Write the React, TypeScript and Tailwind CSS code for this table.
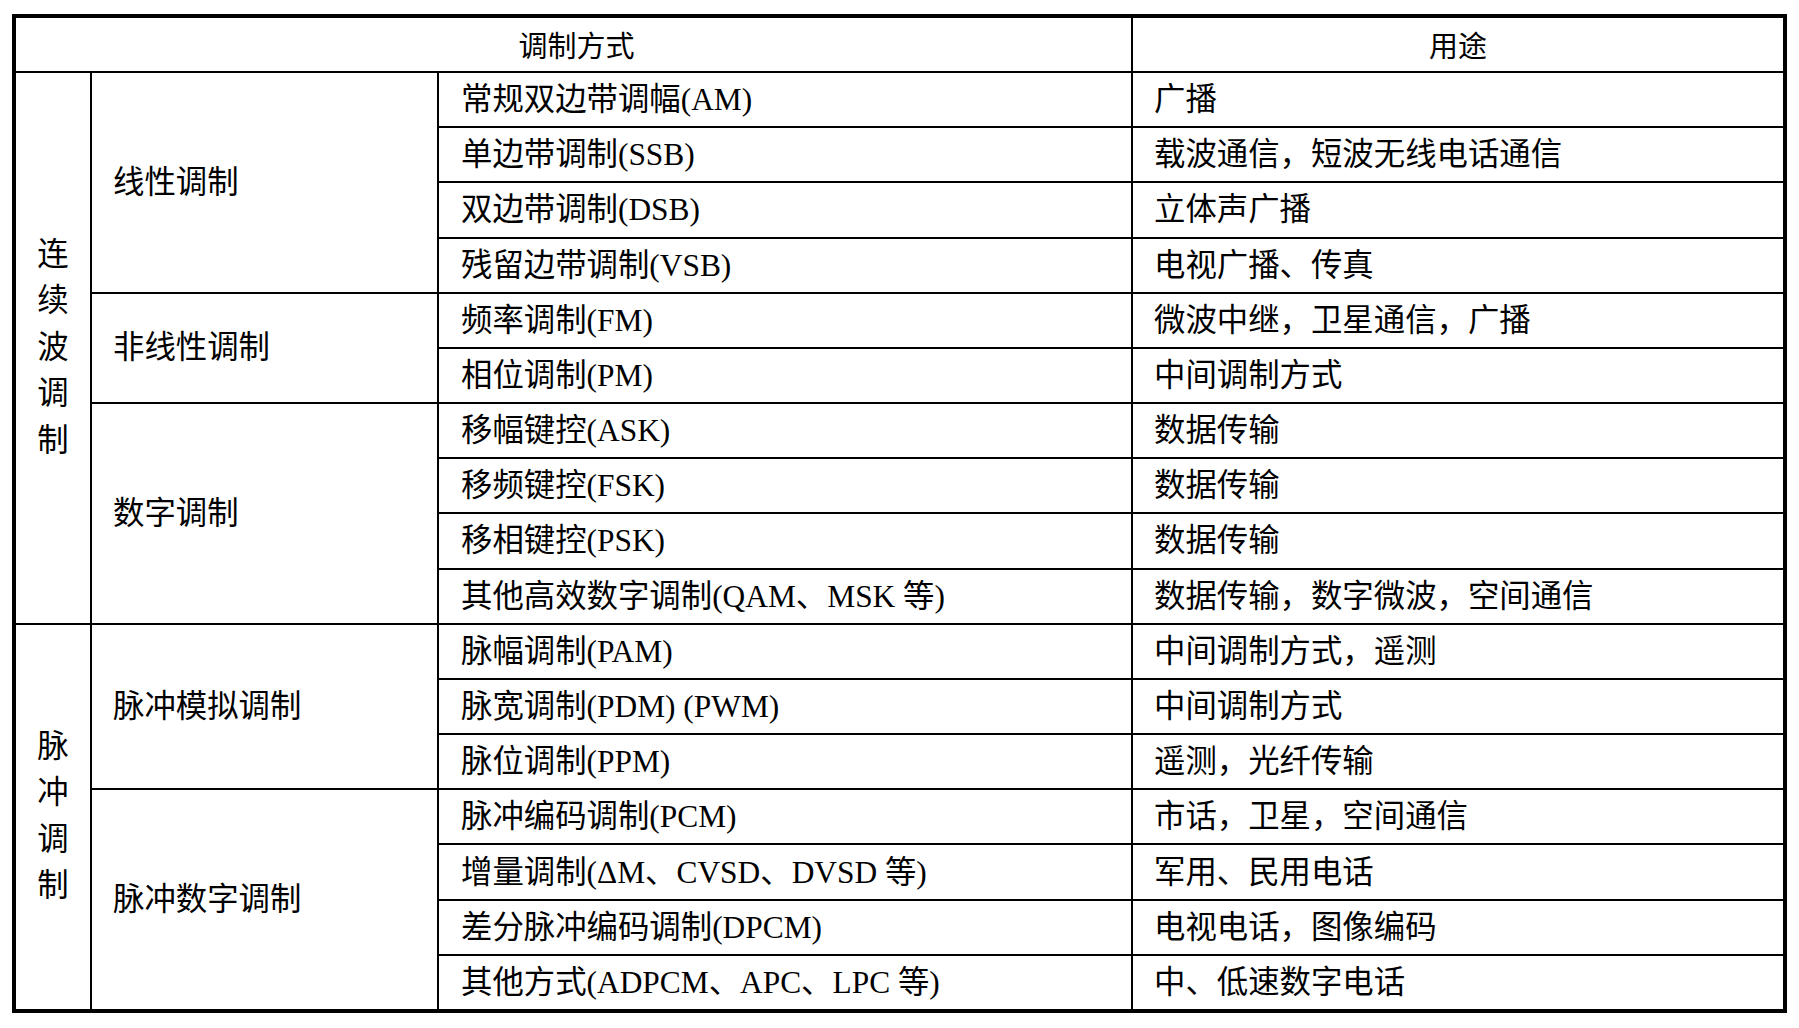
import React from "react";

const body = "font-['Liberation_Serif','Noto_Sans_CJK_SC',serif] text-[31.4px] text-black";

type Row = { method: string; use: string };

const rows: Row[] = [
  { method: "常规双边带调幅(AM)", use: "广播" },
  { method: "单边带调制(SSB)", use: "载波通信，短波无线电话通信" },
  { method: "双边带调制(DSB)", use: "立体声广播" },
  { method: "残留边带调制(VSB)", use: "电视广播、传真" },
  { method: "频率调制(FM)", use: "微波中继，卫星通信，广播" },
  { method: "相位调制(PM)", use: "中间调制方式" },
  { method: "移幅键控(ASK)", use: "数据传输" },
  { method: "移频键控(FSK)", use: "数据传输" },
  { method: "移相键控(PSK)", use: "数据传输" },
  { method: "其他高效数字调制(QAM、MSK 等)", use: "数据传输，数字微波，空间通信" },
  { method: "脉幅调制(PAM)", use: "中间调制方式，遥测" },
  { method: "脉宽调制(PDM) (PWM)", use: "中间调制方式" },
  { method: "脉位调制(PPM)", use: "遥测，光纤传输" },
  { method: "脉冲编码调制(PCM)", use: "市话，卫星，空间通信" },
  { method: "增量调制(ΔM、CVSD、DVSD 等)", use: "军用、民用电话" },
  { method: "差分脉冲编码调制(DPCM)", use: "电视电话，图像编码" },
  { method: "其他方式(ADPCM、APC、LPC 等)", use: "中、低速数字电话" },
];

const rowStart = [
  "row-start-2",
  "row-start-3",
  "row-start-4",
  "row-start-5",
  "row-start-6",
  "row-start-7",
  "row-start-8",
  "row-start-9",
  "row-start-10",
  "row-start-11",
  "row-start-12",
  "row-start-13",
  "row-start-14",
  "row-start-15",
  "row-start-16",
  "row-start-17",
  "row-start-18",
];

function Vertical({ text }: { text: string }) {
  return (
    <div className="flex flex-col items-center">
      {text.split("").map((c, i) => (
        <span key={i} className="leading-[46.5px]">
          {c}
        </span>
      ))}
    </div>
  );
}

export default function App() {
  return (
    <div className="w-[1799px] h-[1028px] bg-white pt-[14px] pl-[12px]">
      <div
        className={`w-[1775px] h-[999px] border-4 border-black bg-black grid gap-[2px] grid-cols-[74px_345px_692px_650px] grid-rows-[53px_repeat(17,minmax(0,1fr))] ${body}`}
      >
        {/* header */}
        <div className="col-start-1 col-span-3 row-start-1 bg-white flex items-center justify-center font-['Noto_Sans_CJK_SC',sans-serif] text-[29px] pl-[6px]">
          调制方式
        </div>
        <div className="col-start-4 row-start-1 bg-white flex items-center justify-center font-['Noto_Sans_CJK_SC',sans-serif] text-[29px]">
          用途
        </div>

        {/* column 1 */}
        <div className="col-start-1 row-start-2 row-span-10 bg-white flex items-center justify-center">
          <Vertical text="连续波调制" />
        </div>
        <div className="col-start-1 row-start-12 row-span-7 bg-white flex items-center justify-center">
          <Vertical text="脉冲调制" />
        </div>

        {/* column 2 */}
        <div className="col-start-2 row-start-2 row-span-4 bg-white flex items-center pl-[21px]">
          线性调制
        </div>
        <div className="col-start-2 row-start-6 row-span-2 bg-white flex items-center pl-[21px]">
          非线性调制
        </div>
        <div className="col-start-2 row-start-8 row-span-4 bg-white flex items-center pl-[21px]">
          数字调制
        </div>
        <div className="col-start-2 row-start-12 row-span-3 bg-white flex items-center pl-[21px]">
          脉冲模拟调制
        </div>
        <div className="col-start-2 row-start-15 row-span-4 bg-white flex items-center pl-[21px]">
          脉冲数字调制
        </div>

        {/* columns 3 and 4 */}
        {rows.map((r, i) => (
          <React.Fragment key={i}>
            <div className={`col-start-3 ${rowStart[i]} bg-white flex items-center pl-[22px] whitespace-nowrap`}>
              {r.method}
            </div>
            <div className={`col-start-4 ${rowStart[i]} bg-white flex items-center pl-[21px] whitespace-nowrap`}>
              {r.use}
            </div>
          </React.Fragment>
        ))}
      </div>
    </div>
  );
}
